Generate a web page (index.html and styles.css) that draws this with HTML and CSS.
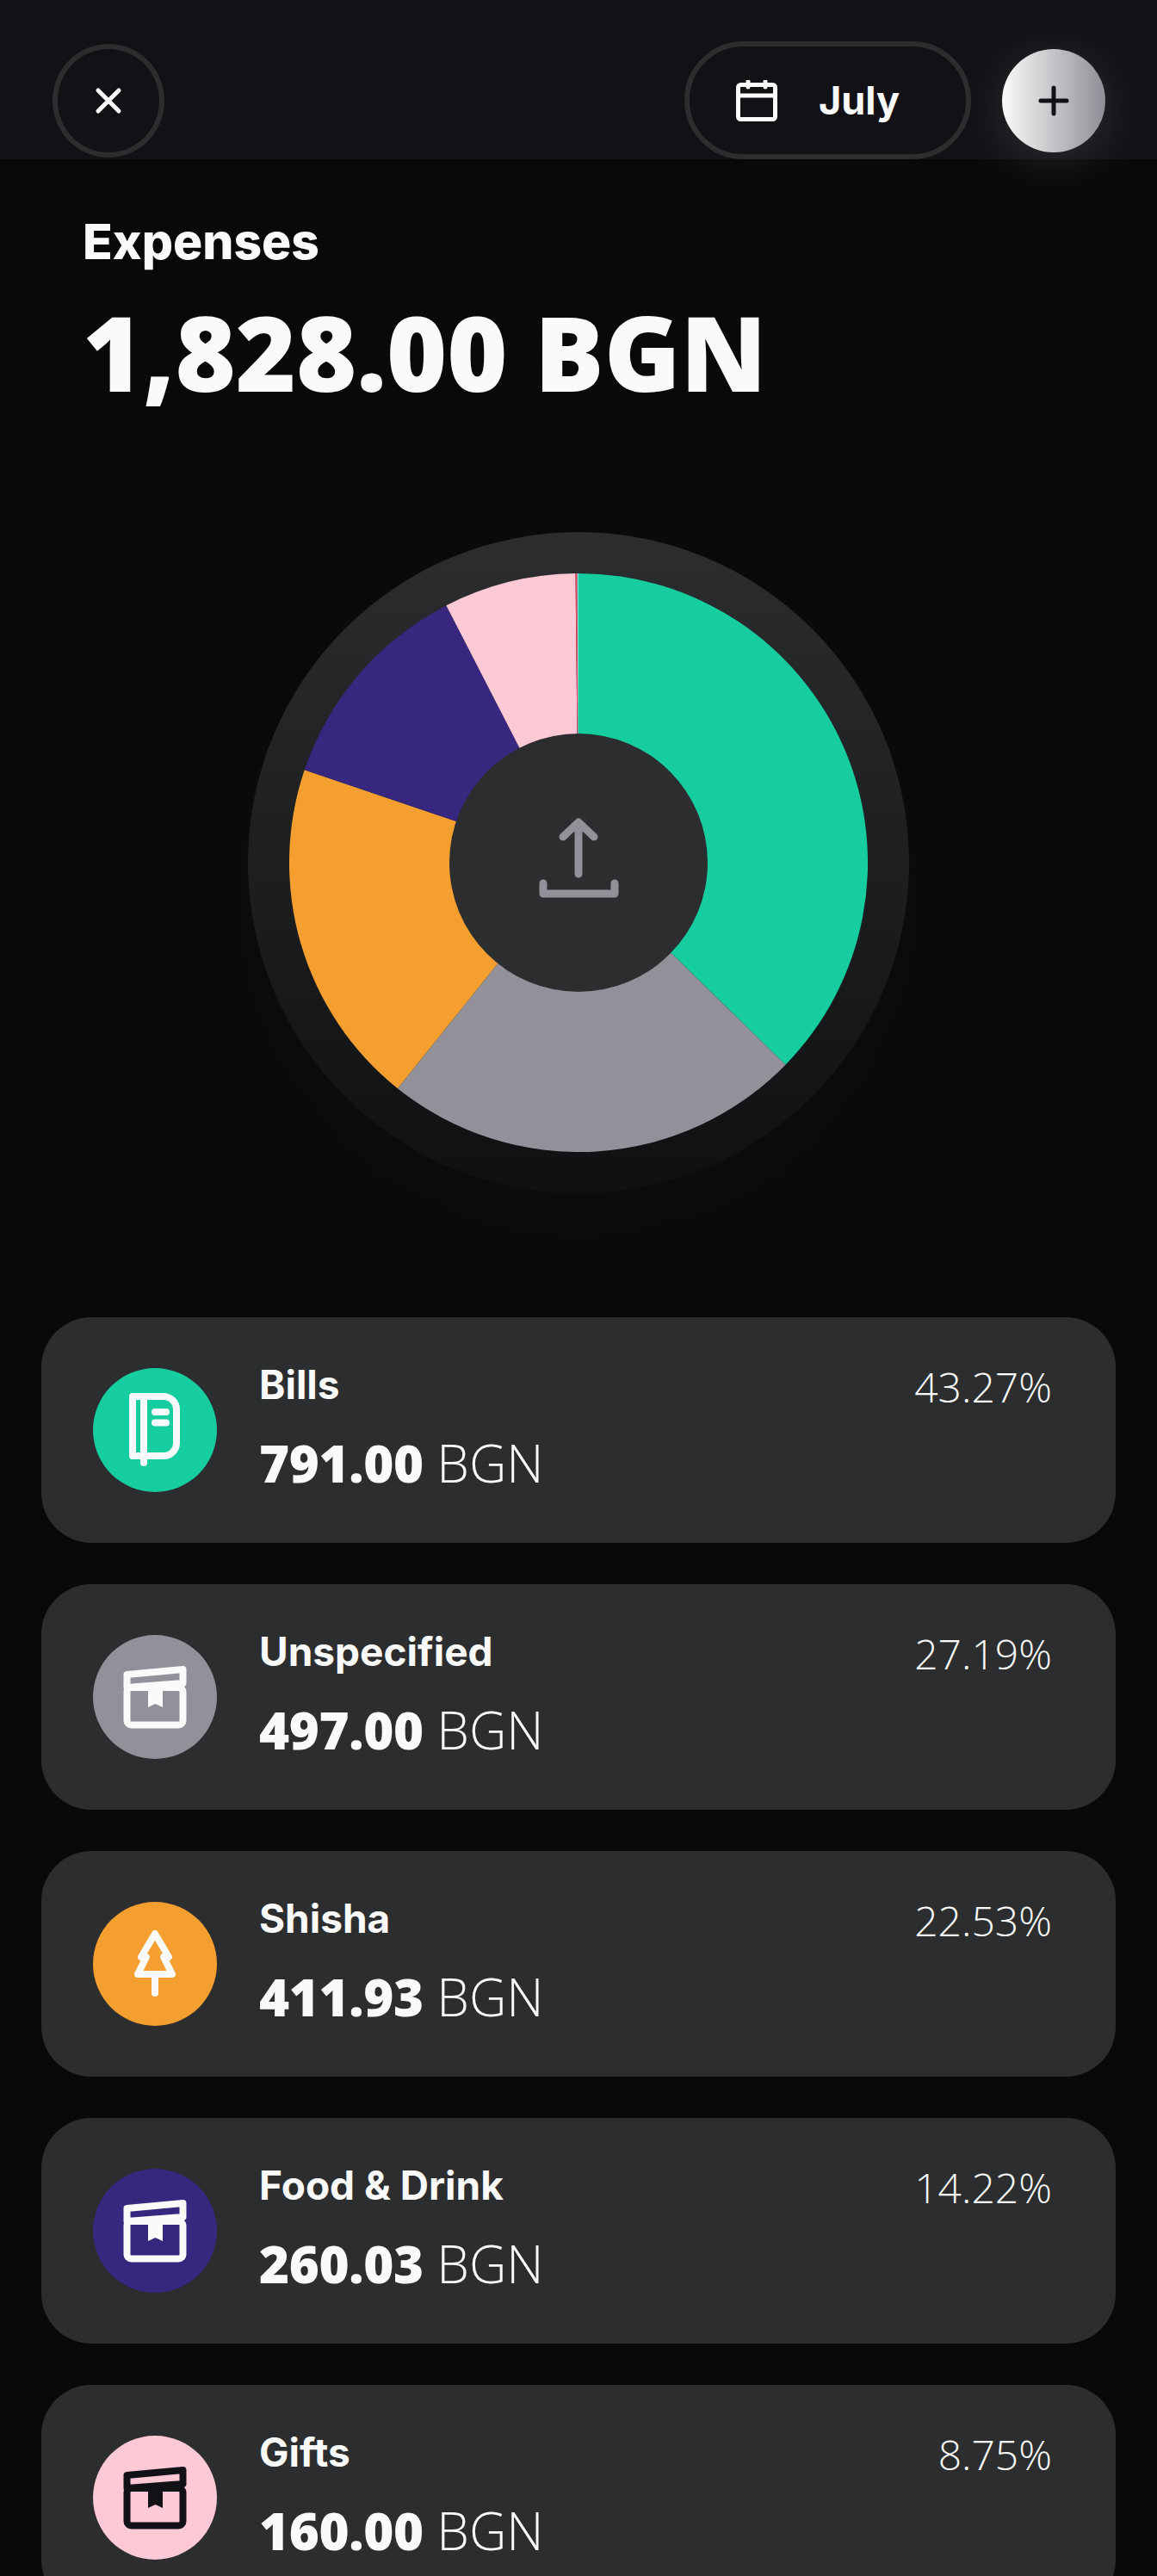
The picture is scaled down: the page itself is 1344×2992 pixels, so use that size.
FILE: index.html
```html
<!DOCTYPE html>
<html>
<head>
  <meta charset="UTF-8" />
  <title>Expenses</title>
  <link rel="stylesheet" href="styles.css">
</head>
<body>

<header class="topbar">
  <button class="close-btn" aria-label="Close">
    <svg width="32" height="32" viewBox="0 0 32 32"><path d="M4 4 L28 28 M28 4 L4 28" class="line-white" /></svg>
  </button>
  <div class="month-pill">
    <svg width="48" height="48" viewBox="0 0 48 48">
      <rect x="2.5" y="5.5" width="43" height="40" rx="3" class="outline-white" />
      <path d="M2.5 18 H45.500 M14 1.500 V8 M34 1.500 V8" class="outline-white" />
    </svg>
    <span>July</span>
  </div>
  <button class="add-btn" aria-label="Add">
    <svg width="36" height="36" viewBox="0 0 36 36"><path d="M3 18 H33 M18 3 V33" class="line-dark" /></svg>
  </button>
</header>

<main>
  <section class="summary">
    <h2>Expenses</h2>
    <h1>1,828.00 BGN</h1>
  </section>

  <div class="chart-ring">
    <svg width="672" height="672" viewBox="0 0 672 672">
      <path d="M336 336 L336 0 A336 336 0 0 1 576.5 570.7 Z" fill="#16cd9f" />
      <path d="M336 336 L576.5 570.7 A336 336 0 0 1 125.9 598.2 Z" fill="#92919a" />
      <path d="M336 336 L125.9 598.2 A336 336 0 0 1 17.7 228.3 Z" fill="#f49f2f" />
      <path d="M336 336 L17.7 228.3 A336 336 0 0 1 182.4 37.2 Z" fill="#37277e" />
      <path d="M336 336 L182.4 37.2 A336 336 0 0 1 332.5 0 Z" fill="#ffc9d6" />
      <path d="M336 336 L332.5 0 L334.500 0 Z" fill="#f0405f" />
      <path d="M336 336 L334.500 0 L336 0 Z" fill="#7fe6d8" />
      <circle cx="336" cy="336" r="150" fill="#2c2d2f" />
      <path d="M336 349 V290 M318 306 L336 289 L354 306" class="upload-line" />
      <path d="M295 360 V372 H378 V360" class="upload-line" />
    </svg>
  </div>

  <div class="card-list">
    <div class="card">
      <div class="cat-icon bg-green">
        <svg width="144" height="144" viewBox="0 0 144 144" class="icon-white">
          <path d="M46 33 H82 A15 15 0 0 1 97 48 V87 A15 15 0 0 1 82 102 H46 Z" />
          <path d="M59 33 V110 M72 51 H85 M72 63.500 H85" />
        </svg>
      </div>
      <div class="card-text">
        <div class="card-top"><span class="cat-name">Bills</span><span class="cat-pct">43.27%</span></div>
        <div class="cat-amount"><b>791.00</b> BGN</div>
      </div>
    </div>

    <div class="card">
      <div class="cat-icon bg-grey">
        <svg width="144" height="144" viewBox="0 0 144 144" class="icon-white">
          <path d="M39.500 46 L104.500 40 V56 L39.500 61 Z" />
          <rect x="39.500" y="61" width="65" height="43.500" rx="5" />
          <path d="M64 62 H81 V84 L72.500 80 L64 84 Z" class="ribbon" />
        </svg>
      </div>
      <div class="card-text">
        <div class="card-top"><span class="cat-name">Unspecified</span><span class="cat-pct">27.19%</span></div>
        <div class="cat-amount"><b>497.00</b> BGN</div>
      </div>
    </div>

    <div class="card">
      <div class="cat-icon bg-orange">
        <svg width="144" height="144" viewBox="0 0 144 144" class="icon-white">
          <path d="M72 37 L88 64 H82 L92 84 H52 L62 64 H56 Z" />
          <path d="M72 84 V106" />
        </svg>
      </div>
      <div class="card-text">
        <div class="card-top"><span class="cat-name">Shisha</span><span class="cat-pct">22.53%</span></div>
        <div class="cat-amount"><b>411.93</b> BGN</div>
      </div>
    </div>

    <div class="card">
      <div class="cat-icon bg-purple">
        <svg width="144" height="144" viewBox="0 0 144 144" class="icon-white">
          <path d="M39.500 46 L104.500 40 V56 L39.500 61 Z" />
          <rect x="39.500" y="61" width="65" height="43.500" rx="5" />
          <path d="M64 62 H81 V84 L72.500 80 L64 84 Z" class="ribbon" />
        </svg>
      </div>
      <div class="card-text">
        <div class="card-top"><span class="cat-name">Food &amp; Drink</span><span class="cat-pct">14.22%</span></div>
        <div class="cat-amount"><b>260.03</b> BGN</div>
      </div>
    </div>

    <div class="card">
      <div class="cat-icon bg-pink">
        <svg width="144" height="144" viewBox="0 0 144 144" class="icon-dark">
          <path d="M39.500 46 L104.500 40 V56 L39.500 61 Z" />
          <rect x="39.500" y="61" width="65" height="43.500" rx="5" />
          <path d="M64 62 H81 V84 L72.500 80 L64 84 Z" class="ribbon" />
        </svg>
      </div>
      <div class="card-text">
        <div class="card-top"><span class="cat-name">Gifts</span><span class="cat-pct">8.75%</span></div>
        <div class="cat-amount"><b>160.00</b> BGN</div>
      </div>
    </div>
  </div>
</main>

</body>
</html>
```

FILE: styles.css
```css
html, body { margin: 0; height: 2992px; overflow: hidden; }
body { background: #08090a; color: #fafafa; font-family: "Open Sans", sans-serif; }
button { padding: 0; cursor: pointer; }
svg { display: block; }

.topbar {
  position: relative;
  z-index: 2;
  display: flex;
  align-items: center;
  height: 137px;
  padding: 48px 60px 0 61px;
  background: #111116;
}
.close-btn {
  width: 130px;
  height: 132px;
  margin-right: auto;
  display: flex;
  align-items: center;
  justify-content: center;
  background: none;
  border: 6px solid #2c2d2f;
  border-radius: 50%;
}
.month-pill {
  width: 333px;
  height: 137px;
  box-sizing: border-box;
  display: flex;
  align-items: center;
  gap: 48px;
  padding-left: 54px;
  border: 6px solid #2c2d2f;
  border-radius: 69px;
  font-family: Inter, sans-serif;
  font-weight: 700;
  font-size: 45px;
}
.add-btn {
  width: 120px;
  height: 120px;
  margin-left: 36px;
  display: flex;
  align-items: center;
  justify-content: center;
  border: none;
  border-radius: 50%;
  background: linear-gradient(90deg, #fafafa, #8f8e96);
  box-shadow: 0 10px 60px rgba(255, 255, 255, 0.13);
}
.line-white { fill: none; stroke: #fafafa; stroke-width: 5; stroke-linecap: round; }
.line-dark { fill: none; stroke: #111116; stroke-width: 5; stroke-linecap: round; }
.outline-white { fill: none; stroke: #fafafa; stroke-width: 5; stroke-linecap: round; }

.summary { padding: 61px 96px 0; }
.summary h2 {
  margin: 0;
  font-family: Inter, sans-serif;
  font-weight: 800;
  font-size: 57px;
  line-height: 70px;
}
.summary h1 {
  margin: 23px 0 0;
  font-weight: 800;
  font-size: 120px;
  line-height: 140px;
}

.chart-ring {
  width: 768px;
  height: 768px;
  margin: 139px auto 0;
  display: flex;
  align-items: center;
  justify-content: center;
  border-radius: 50%;
  background: linear-gradient(180deg, #2c2d2f, #0f1012);
  box-shadow: 0 40px 160px 40px rgba(255, 255, 255, 0.018);
}
.upload-line { fill: none; stroke: #92919a; stroke-width: 9; stroke-linecap: round; stroke-linejoin: round; }

.card-list { display: flex; flex-direction: column; gap: 48px; margin: 144px 48px 0; }
.card {
  height: 262px;
  flex-shrink: 0;
  display: flex;
  align-items: center;
  gap: 49px;
  padding: 0 74px 0 60px;
  background: #2c2d2f;
  border-radius: 58px;
}
.cat-icon { width: 144px; height: 144px; flex-shrink: 0; border-radius: 50%; }
.bg-green { background: #16cd9f; }
.bg-grey { background: #92919a; }
.bg-orange { background: #f49f2f; }
.bg-purple { background: #37277e; }
.bg-pink { background: #ffc9d6; }

.icon-white { fill: none; stroke: #fafafa; stroke-width: 8; stroke-linecap: round; stroke-linejoin: round; }
.icon-white .ribbon { fill: #fafafa; stroke: none; }
.icon-dark { fill: none; stroke: #111116; stroke-width: 8; stroke-linecap: round; stroke-linejoin: round; }
.icon-dark .ribbon { fill: #111116; stroke: none; }

.card-text { flex: 1; margin-top: -6px; }
.card-top { display: flex; justify-content: space-between; align-items: flex-start; }
.cat-name { margin-top: -2px; font-family: Inter, sans-serif; font-weight: 700; font-size: 46px; line-height: 56px; }
.cat-pct { font-weight: 300; font-size: 48px; line-height: 56px; padding-top: 1px; }
.cat-amount { margin-top: 24px; font-weight: 300; font-size: 60px; line-height: 72px; }
.cat-amount b { font-weight: 800; letter-spacing: -0.4px; }
```
